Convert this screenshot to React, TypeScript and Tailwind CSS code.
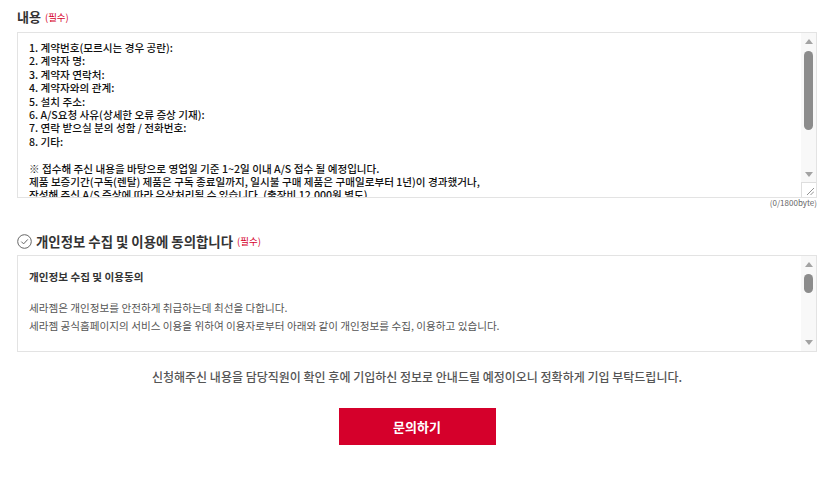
const contentLines = [
  '1. 계약번호(모르시는 경우 공란):',
  '2. 계약자 명:',
  '3. 계약자 연락처:',
  '4. 계약자와의 관계:',
  '5. 설치 주소:',
  '6. A/S요청 사유(상세한 오류 증상 기재):',
  '7. 연락 받으실 분의 성함 / 전화번호:',
  '8. 기타:',
  '',
  '※ 접수해 주신 내용을 바탕으로 영업일 기준 1~2일 이내 A/S 접수 될 예정입니다.',
  '제품 보증기간(구독(렌탈) 제품은 구독 종료일까지, 일시불 구매 제품은 구매일로부터 1년)이 경과했거나,',
  '작성해 주신 A/S 증상에 따라 유상처리될 수 있습니다. (출장비 12,000원 별도)',
]

function Arrow({ up }: { up?: boolean }) {
  return (
    <div className="h-[16px] flex items-center justify-center">
      <svg width="8" height="5" viewBox="0 0 8 5">
        {up ? <polygon points="4,0 8,5 0,5" fill="#a3a3a3" /> : <polygon points="0,0 8,0 4,5" fill="#a3a3a3" />}
      </svg>
    </div>
  )
}

function Required() {
  return <span className="ml-[4px] text-[9.5px] font-normal text-[#d6002b]">(필수)</span>
}

export default function App() {
  return (
    <div className="w-[832px] h-[478px] bg-white pl-[17px] pr-[15px] pt-[8px] font-['Noto_Sans_CJK_KR','Noto_Sans',sans-serif] text-[#222]">
      {/* 내용 */}
      <div className="h-[18px] flex items-center text-[13px] font-bold text-[#333]">
        내용
        <Required />
      </div>

      <div className="mt-[6px] h-[166px] flex border border-[#e3e3e3]">
        <div className="flex-1 overflow-hidden pl-[11px] pt-[8px] text-[10.6px] leading-[13.4px] font-medium text-[#111]">
          {contentLines.map((l, i) => (
            <div key={i} className="h-[13.4px] whitespace-nowrap">{l}</div>
          ))}
        </div>
        {/* scrollbar */}
        <div className="w-[15px] bg-[#f8f8f8] flex flex-col">
          <Arrow up />
          <div className="mt-[2px] h-[79px] w-[9px] self-center rounded-full bg-[#8c8c8c]" />
          <div className="flex-1" />
          <Arrow />
          <div className="h-[15px] border-t border-l border-[#dedede] bg-white flex items-end justify-end p-[2px]">
            <svg width="8" height="8" viewBox="0 0 8 8">
              <line x1="1" y1="8" x2="8" y2="1" stroke="#777" strokeWidth="0.8" />
              <line x1="4.5" y1="8" x2="8" y2="4.5" stroke="#777" strokeWidth="0.8" />
            </svg>
          </div>
        </div>
      </div>
      <div className="h-[10px] flex items-center justify-end text-[8px] text-[#666]">(0/1800byte)</div>

      {/* 개인정보 동의 */}
      <div className="mt-[24px] h-[18px] flex items-center text-[13.4px] font-bold text-[#333]">
        <svg width="15" height="15" viewBox="0 0 15 15" className="mr-[4px]">
          <circle cx="7.5" cy="7.5" r="6.8" fill="none" stroke="#666" strokeWidth="1" />
          <polyline points="4.3,7.6 6.6,9.9 10.8,5.4" fill="none" stroke="#666" strokeWidth="1" />
        </svg>
        개인정보 수집 및 이용에 동의합니다
        <Required />
      </div>

      <div className="mt-[5px] h-[97px] flex border border-[#e3e3e3]">
        <div className="flex-1 overflow-hidden pl-[11px] pt-[12px] text-[10.6px] leading-[18px] text-[#555]">
          <div className="font-bold text-[#333]">개인정보 수집 및 이용동의</div>
          <div className="mt-[13px]">세라젬은 개인정보를 안전하게 취급하는데 최선을 다합니다.</div>
          <div>세라젬 공식홈페이지의 서비스 이용을 위하여 이용자로부터 아래와 같이 개인정보를 수집, 이용하고 있습니다.</div>
        </div>
        <div className="w-[15px] bg-[#f8f8f8] flex flex-col">
          <Arrow up />
          <div className="mt-[2px] h-[19px] w-[9px] self-center rounded-full bg-[#8c8c8c]" />
          <div className="flex-1" />
          <Arrow />
          <div className="h-[1px]" />
        </div>
      </div>

      <p className="mt-[17px] h-[16px] flex items-center justify-center text-[12px] font-medium text-[#555]">
        신청해주신 내용을 담당직원이 확인 후에 기입하신 정보로 안내드릴 예정이오니 정확하게 기입 부탁드립니다.
      </p>

      <div className="mt-[23px] flex justify-center">
        <button className="w-[157px] h-[37px] bg-[#d5002b] text-white text-[13px] font-bold">문의하기</button>
      </div>
    </div>
  )
}
